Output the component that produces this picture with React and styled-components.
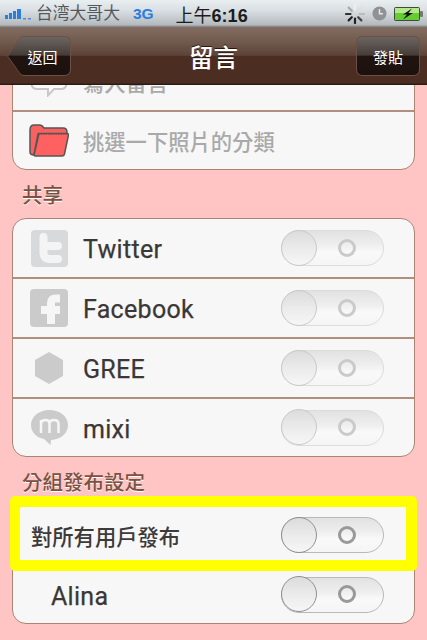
import React from "react";
import styled, { createGlobalStyle } from "styled-components";

const Global = createGlobalStyle`
  html, body { margin: 0; padding: 0; background: #ffc4c4; }
  * { box-sizing: border-box; }
`;
const cjk = `Roboto, "Noto Sans CJK TC", "Liberation Sans", sans-serif`;

const Screen = styled.div`
  width: 427px; height: 640px; overflow: hidden; display: flex; flex-direction: column;
  background: #ffc4c4; font-family: ${cjk};
`;
const StatusBar = styled.div`
  height: 27px; flex: none; display: flex; align-items: center; padding: 0 4px 0 5px;
  background: linear-gradient(#e9eef0, #dbe1e4 35%, #b4babd 92%, #7d7d7b 100%);
`;
const Carrier = styled.span`
  font-size: 16.8px; color: #55585b; margin-left: 5px; line-height: 27px; white-space: nowrap;
`;
const Network = styled.span`
  font: bold 15.5px "Liberation Sans", sans-serif; color: #2a7de0; margin-left: 13px;
`;
const Clock = styled.span`
  font-size: 18px; font-weight: 700; font-family: "Liberation Sans", "Noto Sans CJK TC", sans-serif;
  color: #1c1c1c; margin-left: 22px; white-space: nowrap;
`;
const Ampm = styled.span`font-weight: 400;`;
const StatusRight = styled.div`
  margin-left: auto; display: flex; align-items: center; gap: 7px;
`;
const NavBar = styled.div`
  height: 58px; flex: none; display: flex; align-items: center; justify-content: space-between;
  padding: 0 7px; position: relative; z-index: 2;
  background: linear-gradient(#836d62 0, #715a4e 25%, #5c4337 49%, #4b2d21 50%, #4b2d21 96%, #1f1612 100%);
`;
const Title = styled.div`
  font-size: 24.500px; color: #fff; text-shadow: 0 -1px 0 #2a170f; font-weight: 500;
`;
const BarShape = styled.div`
  width: 64px; height: 40px; padding: 1px; background: #6a5045;
  clip-path: ${(p) => p.$back
    ? `path("M0 20 L13 2 Q14 0 17 0 H57 Q64 0 64 7 V33 Q64 40 57 40 H17 Q14 40 13 38 Z")`
    : `path("M7 0 H57 Q64 0 64 7 V33 Q64 40 57 40 H7 Q0 40 0 33 V7 Q0 0 7 0 Z")`};
`;
const BarFace = styled.div`
  width: 100%; height: 100%; display: flex; align-items: center; justify-content: center;
  padding-left: ${(p) => (p.$back ? "7px" : "0")};
  font-size: 15px; color: #fff;
  background: linear-gradient(#6b6561 0, #453c37 48%, #201410 50%, #1c110c 100%);
  clip-path: ${(p) => p.$back
    ? `path("M0 19 L12 2 Q13 0 16 0 H56 Q62 0 62 6 V32 Q62 38 56 38 H16 Q13 38 12 36 Z")`
    : `path("M6 0 H56 Q62 0 62 6 V32 Q62 38 56 38 H6 Q0 38 0 32 V6 Q0 0 6 0 Z")`};
`;
const Content = styled.div`
  flex: 1; min-height: 0; overflow: hidden; padding: 0 12px;
`;
const Card = styled.div`
  border: 1.5px solid #ab8472; border-radius: 14px; background: #f7f7f7; position: relative;
  margin-top: ${(p) => p.$top || "0"};
`;
const Row = styled.div`
  height: 60px; display: flex; align-items: center; position: relative;
  padding-left: ${(p) => p.$indent || "16px"}; padding-right: 30px;
  & + & { border-top: 2px solid #b28e7c; }
  &:first-child { height: 58px; }
  &:last-child { height: 59px; }
`;
const IconCell = styled.div`
  width: 40px; flex: none; margin-right: 14px; display: flex; justify-content: center; align-items: center;
`;
const RowLabel = styled.span`
  font-size: 25px; font-weight: 400; letter-spacing: 0.3px; padding-top: 3px;
  color: #3a3736; -webkit-text-stroke: 0.25px #3a3736;
  white-space: nowrap;
`;
const RowLabelCjk = styled.span`
  font-size: 21.3px; font-weight: 500; white-space: nowrap;
  color: ${(p) => (p.$muted ? "#a9a9a9" : "#3d3a39")};
`;
const SectionLabel = styled.div`
  height: 48px; display: flex; align-items: center; padding-left: 10px;
  font-size: 20.5px; font-weight: 500; color: #7b5241; text-shadow: 0 1px 0 #fff;
`;
const Toggle = styled.div`
  margin-left: auto; width: 103px; height: 36px; border-radius: 18px; position: relative; flex: none;
  border: 1.5px solid ${(p) => (p.$dim ? "#dcdcdc" : "#b9b9b9")};
  background: linear-gradient(#e2e2e2 0, #eeeeee 40%, #f9f9f9 62%, #f5f5f5 100%);
`;
const Knob = styled.div`
  position: absolute; left: -1.5px; top: -1.5px; width: 36px; height: 36px; border-radius: 50%;
  border: 1.5px solid ${(p) => (p.$dim ? "#c9c9c9" : "#8f8f8f")};
  background: linear-gradient(#dcdcdc, #ececec 55%, #f6f6f6);
`;
const Ring = styled.div`
  position: absolute; left: 56px; top: 7.5px; width: 18px; height: 18px; border-radius: 50%;
  border: 3px solid ${(p) => (p.$dim ? "#cacaca" : "#999")};
`;
const Highlight = styled.div`
  position: absolute; left: -3.5px; right: -2.5px; top: -10.5px; bottom: -6.5px; z-index: 1;
  border: solid #ffff00; border-width: 11px 11px 11px 10px; border-radius: 5px; pointer-events: none;
`;

const Switch = ({ dim }) => (
  <Toggle $dim={dim}><Knob $dim={dim} /><Ring $dim={dim} /></Toggle>
);

const Signal = () => (
  <svg width="26" height="14" viewBox="0 0 26 14">
    <g fill="#2b7fdc">
      <rect x="0" y="8" width="3" height="4" /><rect x="4" y="6" width="3" height="6" />
      <rect x="8" y="4" width="3" height="8" /><rect x="12" y="2" width="4" height="10" />
      <rect x="18" y="11" width="3" height="1.5" opacity=".8" /><rect x="23" y="11" width="3" height="1.5" opacity=".8" />
    </g>
  </svg>
);
const Spinner = () => (
  <svg width="20" height="20" viewBox="-10 -10 20 20">
    {[0, 45, 90, 135, 180, 225, 270, 315].map((a, i) => (
      <line key={a} x1="0" y1="-4.5" x2="0" y2="-9" strokeWidth="2.2" strokeLinecap="round"
        transform={`rotate(${a})`} stroke={["#eee", "#ddd", "#bbb", "#444", "#222", "#222", "#333", "#aaa"][i]} />
    ))}
  </svg>
);
const ClockIcon = () => (
  <svg width="15" height="15" viewBox="0 0 15 15">
    <circle cx="7.5" cy="7.5" r="7" fill="#8f9294" />
    <path d="M7.5 3V7.8H11" fill="none" stroke="#e6e6e6" strokeWidth="1.5" />
  </svg>
);
const Battery = () => (
  <svg width="29" height="14" viewBox="0 0 29 14">
    <rect x="0.5" y="0.5" width="25" height="13" rx="1" fill="#66cc33" stroke="#3f4a3a" />
    <rect x="1" y="1" width="24" height="5" fill="#b4e88c" />
    <rect x="26" y="4" width="3" height="6" rx="1" fill="#777" />
    <path d="M18 1.5L9 7.5H13L9 12.5L19 6H14.5Z" fill="#111" />
  </svg>
);
const Bubble = () => (
  <svg width="38" height="32" viewBox="0 0 38 32">
    <path d="M7 1.5H31Q36.5 1.5 36.5 7V18Q36.5 24 31 24H24L18 30.5V24H7Q1.5 24 1.5 18V7Q1.5 1.5 7 1.5Z" fill="#fbfbfb" stroke="#c8c8c8" strokeWidth="2" />
  </svg>
);
const Folder = () => (
  <svg width="40" height="34" viewBox="0 0 40 34">
    <path d="M1 6Q1 1 5 1H11Q13 1 15 4H34Q38 4 38 8V10H9L5 31Q1 31 1 28Z" fill="#f96060" stroke="#555" strokeWidth="1.5" />
    <path d="M6 32H33Q35 32 35.500 30L39.500 11Q39.500 9.500 38 9.500H10L5 31Z" fill="#ff6060" stroke="#555" strokeWidth="1.5" />
    <path d="M9 10H38" stroke="#555" strokeWidth="1" strokeDasharray="1.500 1" />
  </svg>
);
const TwitterIcon = () => (
  <svg width="37" height="37" viewBox="0 0 37 37">
    <rect width="37" height="37" rx="4" fill="#d8d9da" />
    <path d="M12.500 7V22Q12.500 29 19 29H27M12.500 16H27" fill="none" stroke="#f4f4f4" strokeWidth="8" strokeLinecap="round" />
  </svg>
);
const FacebookIcon = () => (
  <svg width="38" height="38" viewBox="0 0 38 38">
    <rect width="38" height="38" rx="4" fill="#cbcbcb" />
    <path d="M21 35V14Q21 9.500 26 9.500H30M11 21H30" fill="none" stroke="#f6f6f6" strokeWidth="8" />
  </svg>
);
const Hexagon = () => (
  <svg width="28" height="32" viewBox="0 0 28 32"><path d="M14 0L28 8V24L14 32L0 24V8Z" fill="#cbcbcb" /></svg>
);
const MixiIcon = () => (
  <svg width="37" height="36" viewBox="0 0 37 36">
    <path d="M18.500 0C29 0 37 6.500 37 15C37 23 30 29.500 20 30L19.500 35L13 29C5 27.500 0 22 0 15C0 6.500 8 0 18.500 0Z" fill="#cbcbcb" />
    <path d="M8 23V10M8 14Q8 10 12.500 10Q16.500 10 16.500 14V23M16.500 14Q16.500 10 21 10Q25.500 10 25.500 14V23" transform="translate(2 0)" fill="none" stroke="#f6f6f6" strokeWidth="2.5" />
  </svg>
);

const shares = [
  ["Twitter", <TwitterIcon />], ["Facebook", <FacebookIcon />], ["GREE", <Hexagon />], ["mixi", <MixiIcon />],
];

export default function App() {
  return (
    <Screen>
      <Global />
      <StatusBar>
        <Signal />
        <Carrier>台湾大哥大</Carrier>
        <Network>3G</Network>
        <Clock><Ampm>上午</Ampm>6:16</Clock>
        <StatusRight><Spinner /><ClockIcon /><Battery /></StatusRight>
      </StatusBar>
      <NavBar>
        <BarShape $back><BarFace $back>返回</BarFace></BarShape>
        <Title>留言</Title>
        <BarShape><BarFace>發貼</BarFace></BarShape>
      </NavBar>
      <Content>
        <Card $top="-34px">
          <Row>
            <IconCell><Bubble /></IconCell>
            <RowLabelCjk $muted>寫入留言</RowLabelCjk>
          </Row>
          <Row>
            <IconCell><Folder /></IconCell>
            <RowLabelCjk $muted>挑選一下照片的分類</RowLabelCjk>
          </Row>
        </Card>
        <SectionLabel>共享</SectionLabel>
        <Card>
          {shares.map(([name, icon]) => (
            <Row key={name}>
              <IconCell>{icon}</IconCell>
              <RowLabel>{name}</RowLabel>
              <Switch dim />
            </Row>
          ))}
        </Card>
        <SectionLabel>分組發布設定</SectionLabel>
        <Card>
          <Row $indent="18px">
            <RowLabelCjk>對所有用戶發布</RowLabelCjk>
            <Switch />
            <Highlight />
          </Row>
          <Row $indent="38px">
            <RowLabel>Alina</RowLabel>
            <Switch />
          </Row>
        </Card>
      </Content>
    </Screen>
  );
}
